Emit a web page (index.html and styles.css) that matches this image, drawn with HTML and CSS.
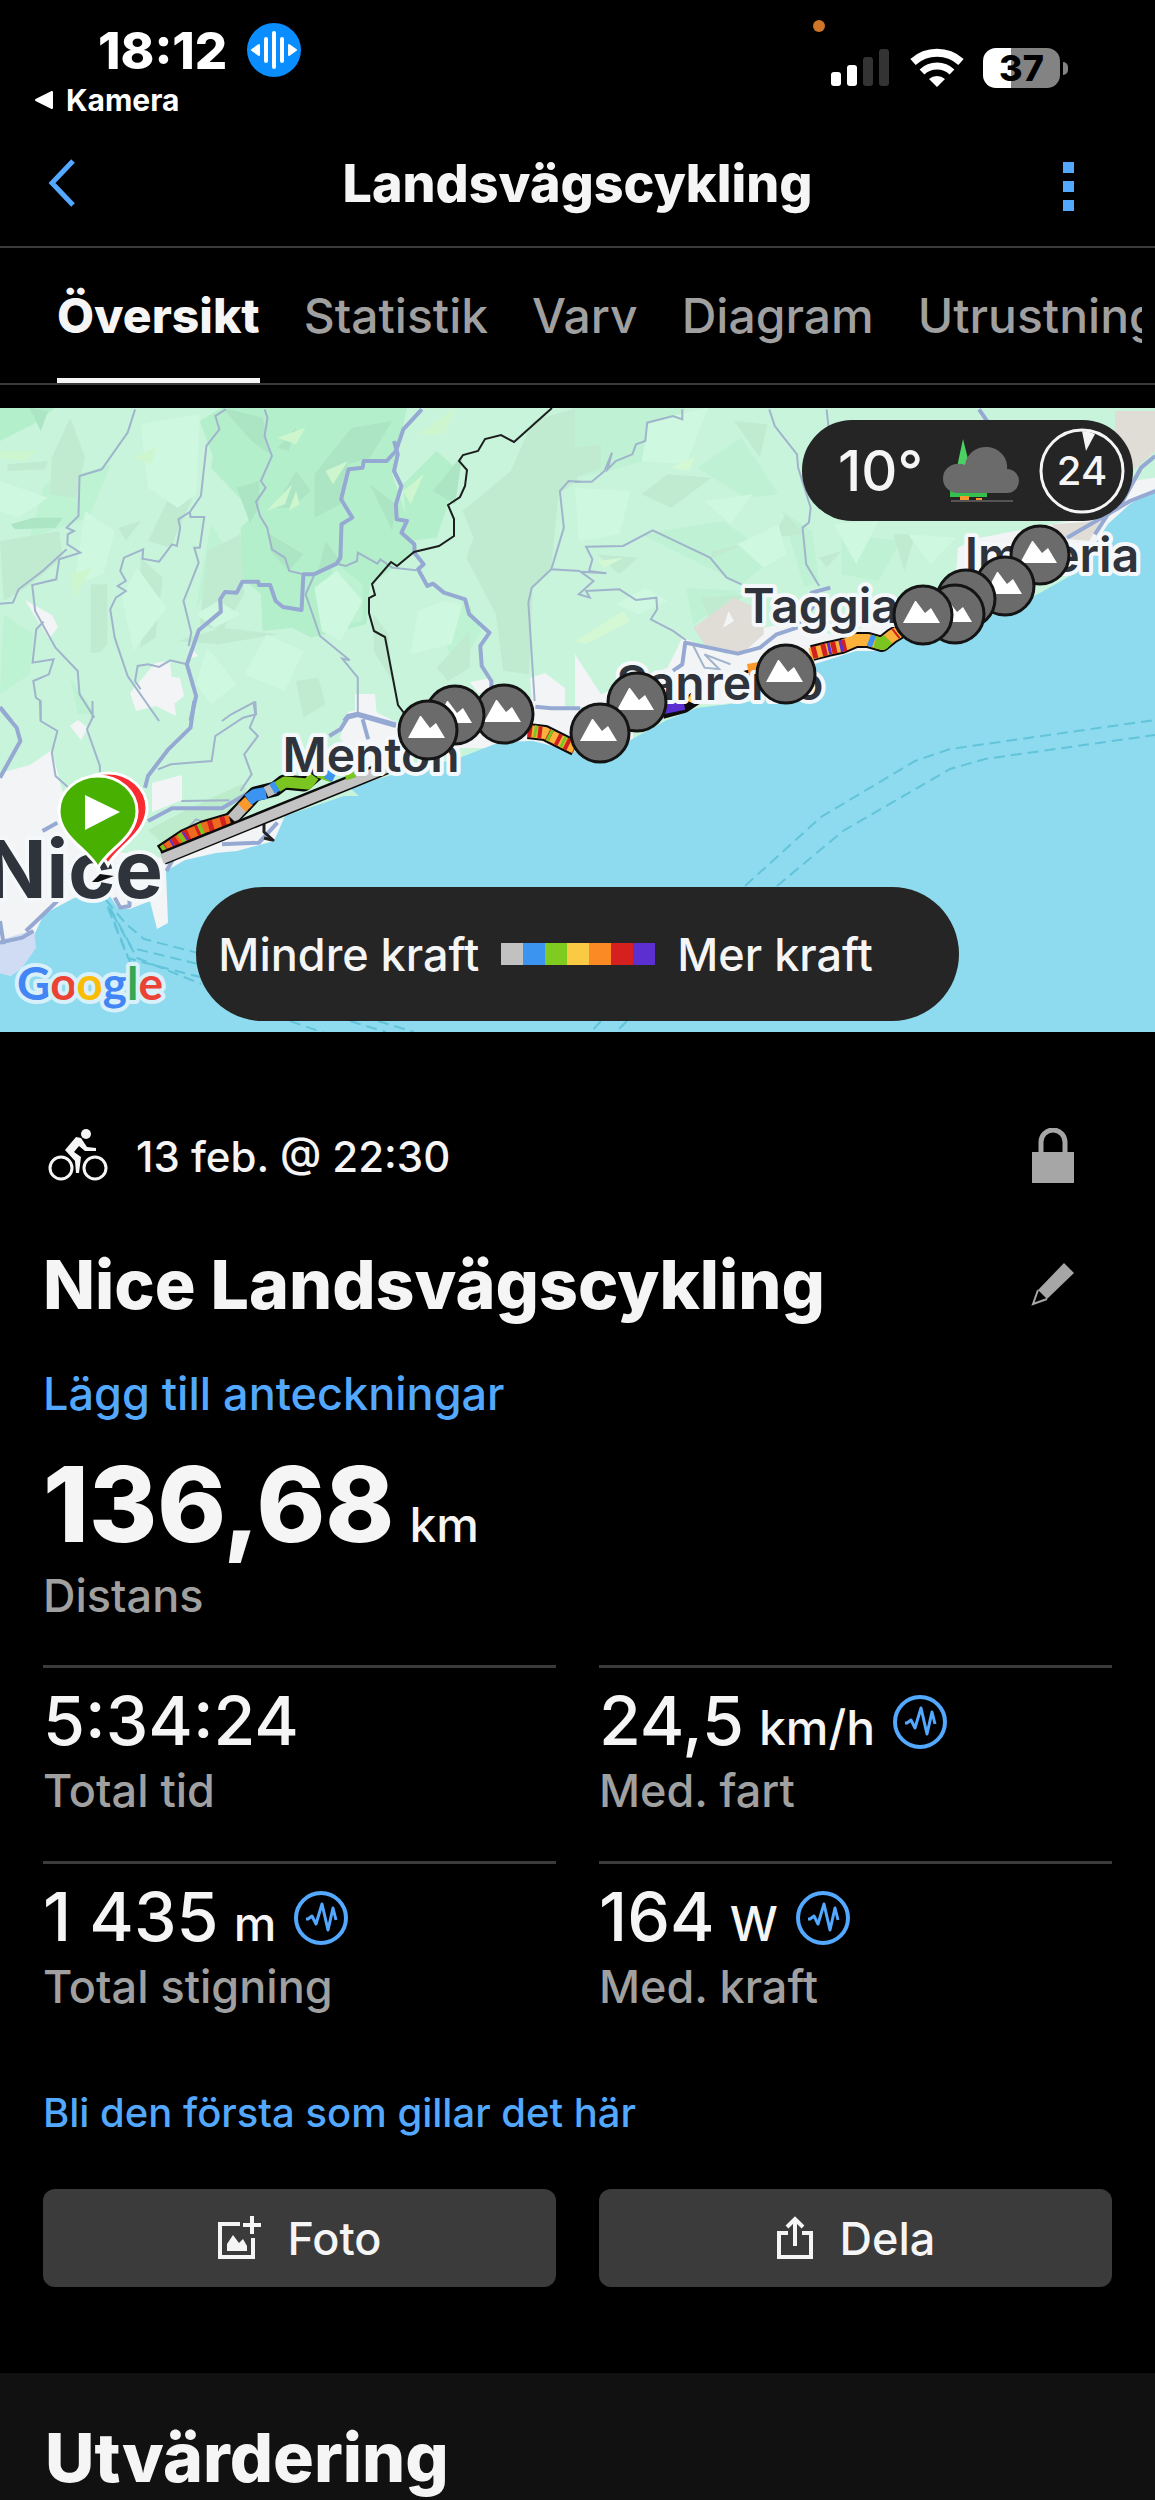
FILE: index.html
```html
<!DOCTYPE html>
<html lang="sv">
<head>
  <meta charset="UTF-8" />
  <meta name="viewport" content="width=device-width, initial-scale=1.0">
  <title>Landsvägscykling</title>
  <link rel="stylesheet" href="styles.css">
</head>
<body>

<!-- shared icons -->
<svg class="defs" aria-hidden="true">
  <symbol id="peak" viewBox="-32 -32 64 64">
    <circle r="29" fill="#6b6b6b" stroke="#141414" stroke-width="3"/>
    <path d="M-20 8L-8-14-7-14 2-2 8-7 17 8z" fill="#fff"/>
  </symbol>
  <symbol id="pulse" viewBox="0 0 54 54">
    <circle cx="27" cy="27" r="25" fill="none" stroke="#53a8ff" stroke-width="4"/>
    <path d="M12 28h2l4-3 4 8 6-20 6 26 5-22 3 12" fill="none" stroke="#53a8ff" stroke-width="3" stroke-linejoin="round"/>
  </symbol>
</svg>

<div class="status-bar">
  <div class="status-left">
    <div class="clock">
      <span>18:12</span>
      <svg width="54" height="54" viewBox="0 0 54 54">
        <circle cx="27" cy="27" r="27" fill="#0a8dff"/>
        <path d="M27 10v34M19 16v22M35 16v22" stroke="#fff" stroke-width="4" stroke-linecap="round"/>
        <path d="M12 22v10l-7-5zM42 22v10l7-5z" fill="#fff" stroke="#fff" stroke-width="2" stroke-linejoin="round"/>
      </svg>
    </div>
    <a class="back-app" href="#">
      <svg width="20" height="20" viewBox="0 0 20 20"><path d="M18 2v16L2 10z" fill="#fff" stroke="#fff" stroke-width="2" stroke-linejoin="round"/></svg>
      Kamera
    </a>
  </div>
  <div class="status-right">
    <i class="mic-dot"></i>
    <svg width="60" height="40" viewBox="0 0 60 40">
      <rect x="0" y="24" width="10" height="14" rx="3" fill="#fff"/>
      <rect x="16" y="17" width="10" height="21" rx="3" fill="#fff"/>
      <rect x="32" y="9" width="10" height="29" rx="3" fill="#333"/>
      <rect x="48" y="1" width="10" height="37" rx="3" fill="#333"/>
    </svg>
    <svg width="54" height="40" viewBox="0 0 54 40">
      <path d="M3 14a36 36 0 0 1 48 0" fill="none" stroke="#fff" stroke-width="8"/>
      <path d="M12 24a22 22 0 0 1 30 0" fill="none" stroke="#fff" stroke-width="7"/>
      <path d="M19 31a12 12 0 0 1 16 0l-8 8z" fill="#fff"/>
    </svg>
    <div class="battery"><span>37</span></div>
  </div>
</div>

<header class="top-bar">
  <button class="icon-btn back" aria-label="Tillbaka">
    <svg width="28" height="48" viewBox="0 0 28 48"><path d="M25 2L4 24l21 22" fill="none" stroke="#53a8ff" stroke-width="5"/></svg>
  </button>
  <h1>Landsvägscykling</h1>
  <button class="icon-btn" aria-label="Meny">
    <svg width="12" height="56" viewBox="0 0 12 56" fill="#53a8ff"><path d="M0 7h11v11H0zM0 26h11v11H0zM0 45h11v11H0z"/></svg>
  </button>
</header>

<nav class="tabs">
  <div class="tab-scroll">
    <a class="active" href="#">Översikt</a>
    <a href="#">Statistik</a>
    <a href="#">Varv</a>
    <a href="#">Diagram</a>
    <a href="#">Utrustning</a>
  </div>
</nav>

<section class="map">
  <svg class="map-canvas" viewBox="0 0 1155 624">
    <rect width="1155" height="624" fill="#c8f4dc"/>

    <!-- hills -->
    <g transform="translate(0 -7) scale(.37 .3333)">
      <g fill="#b4efcb">
        <path d="M600 20H1100L1060 220 1130 450 1000 550 990 670 840 710 790 680 710 690 705 580 655 530 650 380 690 340 570 200z"/>
        <path d="M0 20h150L90 70 0 120zM540 60l60-40v220z"/>
        <path d="M1090 250l90-100 60 60-60 200-80 10z"/>
      </g>
      <g fill="#bdf2d3">
        <path d="M120 250l180-60-60 160-160 60zM10 640l80 60-10 120-80 60zM900 480l80 70v110l-100 20zM190 830l70 110H210zM570 370l50 90-90 160zM1190 700l70-110 40 100-60 120zM1360 300l70 160-60 130-60-80z"/>
      </g>
      <g fill="#c1ebd1">
        <path d="M190 50l40 120-25 120-70-10 5-110zM0 420l160-30 10 80-100 90-60 40zM20 190l110-10-10 25-100 5zM245 550h45v180l-20 25h-25zM320 380l60-20-40 60zM380 470l60 60-20 180-40 30zM560 450l90-50 10 180-60 110-60-20zM470 260l50 30-60 150-60-20z"/>
        <path d="M1250 330l130-120 60-150 120-40v220l-50 40-20 220-50 60-10 260-70-10-20-170-80-170 20-60zM1180 800l90-110v110l-60 40zM1010 640l40 60 10 140-50-90zM480 720l120-40 150 20-160 30zM800 840l60-10 20 80-60 40z"/>
      </g>
      <g fill="#ace5c3">
        <path d="M600 20l110 30 20 110-50-40zM640 260l60-20v80l-25 45zM730 400l90 60-40 50-50-60zM30 370l60-20 80 0-20 30-110 5z"/>
        <path d="M850 220l100-140 110-20-60 110-60 20-20 120-70 40zM1000 250l70 60-10 80zM880 420l40 60-60 30zM750 140l50-60-20 70zM1170 270l80-110-20 150zM740 320l60-110 40 60-50 50zM80 20l50 10-20 60z"/>
      </g>
      <g fill="#cff8e0">
        <path d="M380 70l160-30-10 240-50 40-80-60zM230 330l80 60-30 130-80 30zM0 240l130 50-80 60-50-20zM330 590l40-90 80 120-90 130zM720 700l100 50-50 120-110-50zM530 640l60-40 60 40-70 40zM850 560l60-50 70 90-60 120-50-30zM1200 600l50 10-30 120-110 30 20-130zM560 740l80 110-70 60-40-60z"/>
      </g>
      <g fill="#cdf6cf">
        <path d="M750 110l75-30-25 50zM720 330l70-80-20 60zM1090 270l55-50-35 90zM880 210l60-30-40 70zM0 150h100l-30 30-70-10zM190 520l60-20-50 90zM1130 100l100-80-30 80zM780 330l20-60 10 40zM360 170l60-30-10 50z"/>
      </g>
    </g>
    <g transform="translate(575 -7) scale(.37 .3333)">
      <g fill="#bff1d4">
        <path d="M0 20h300l-80 150-130 40-90 20zM330 200l120-90 100 170-90 10zM180 400l220-40 140 110-90 80zM560 330l80 60 20 150-40 20zM300 560l150 10-130 100zM720 400l160 20-60 120-100-20z"/>
      </g>
      <g fill="#c1ebd1">
        <path d="M0 140l70-10v70l-70 30zM180 280l70-60 120 10-110 90zM370 450l90-20-90 40zM570 340l50 60-90 10zM660 470l60-20-40 50zM860 400h60l-30 110zM340 590l120-10-90 90zM60 460l110 10-50 50zM430 60l90 10-20 100z"/>
      </g>
      <g fill="#cff8e0">
        <path d="M200 60l160-40-60 170-120-10zM0 260l150 10-30 130-110 20zM440 430l110-60 20 90-60 40zM700 370l120-10-60 130zM110 610l80-50 60 40-80 40zM350 300l130-20-60 90zM900 400l130 10-70 80z"/>
      </g>
      <path d="M260 200l65-35-15 45zM0 720l130-90 20 30-120 70zM60 480l70-10-50 30z" fill="#d3f8d3"/>
      <!-- towns and bare ground -->
      <g fill="#f3f4f6">
        <path d="M250 800l40-90 120 50 100-80 90-20 90 40 120 20 60-20v110L400 910H90L0 920V760l70 120z"/>
        <path d="M1035 440l60-30 240-50 110-110 123-20v80l-180 160-120 40-160 40h-80zM760 690l90-60 20 80z"/>
      </g>
      <path d="M320 680l110-90 80 40v70l-60 60-100-30zM1460 30h108v120l-60 60-50-80zM1290 370l130-10-30 60-90-10z" fill="#dfddd6"/>
      <path d="M400 680l15-50 15 30z" fill="#f3f4f6"/>
    </g>
    <g fill="#f3f4f6">
      <path d="M0 365l30-8 22-15 10 40 40 60 60 8 20-10 30-20 80-10 40-15v30l-90 40-60 20 14 60-20 20-40-60H60L20 560 0 570zM340 330l8-26 20-4 40 20 60-25 80 10 30-5 55 10v30L420 340l-40 30-20-10zM530 270l15-5 20 15v50h-30z"/>
      <path d="M25 192l27 15 6 12-9 12zM130 285l25-30 15-2 3 30 3 25-20-10-20 5zM168 268l12 2 4 18-10 8zM355 286h20l2 24h-22zM190 238l8 10-7 2zM70 318l8-6 10 8-7 12zM470 274l20-4v15h-12z"/>
      <path d="M152 375l30-8v25l-30 12z"/>
    </g>
    <path d="M148 422l42-22 52-24 10 12-42 35-40 20z" fill="#bdeccd"/>

    <!-- sea -->
    <path d="M1155 81L1130 96 1108 116 1095 136 1075 165 1040 185 1010 200 960 220 897 232 880 243 856 243 815 256 812 275 782 290 697 300 667 312 625 335 580 345 533 333 500 334 459 350 388 368 350 380 359 388 344 388 285 408 274 433 237 443 216 445 185 452 166 463 168 515 157 521 150 493 130 501 118 500 107 484 74 490 44 506 22 553 11 568 0 565V624H1155z" fill="#8edaee"/>
    <path d="M0 532l34-10 2 18-14 20-11 8-11-3z" fill="#cfdcf3"/>

    <!-- ferry lines -->
    <g fill="none" stroke="#62c4da" stroke-width="2" stroke-dasharray="11 6">
      <path d="M745 478L821 409 915 353 950 341 1155 312M777 478L843 423 950 361 985 351 1155 327"/>
      <path d="M106 492l20 24 18 15 54 14M110 500l22 40 66 16M108 500l20 50 14 4 58 15M112 505l25 45 64 26M108 498l22 56"/>
      <path d="M290 613l40 14M350 613l36 11M378 613l36 11M601 613l-10 11M627 613l-11 11"/>
    </g>

    <!-- small roads -->
    <g fill="none" stroke="#a0b4cc" stroke-width="2">
      <g transform="translate(0 -7) scale(.37 .3333)">
        <path vector-effect="non-scaling-stroke" d="M365 25L345 95 275 205 215 225 212 345 180 380 200 390 183 400 182 430 217 455 160 475 152 535 87 552 95 630 150 740 210 810 215 880 255 950M180 445L115 510 50 565 35 605 0 608M118 662L98 685 88 785 145 775 132 820 90 840 97 890 110 900V960"/>
        <path vector-effect="non-scaling-stroke" d="M610 25L582 45 593 85 558 135 543 285 513 333 482 355 487 380 478 435 465 430 430 482 385 473 387 445 335 470 325 510 340 540 318 555 340 570 313 590 298 625 310 710 345 825 430 960M513 333L515 348H552L540 440 525 440 537 485 496 600 517 695 510 735M505 790L460 778 430 798 400 790 372 795 365 840 380 865"/>
        <path vector-effect="non-scaling-stroke" d="M715 25L723 50 715 105 735 165 705 240 718 260 692 303 703 345 722 380 735 445 770 470 782 510 820 520M848 525L826 580 865 705 945 778 925 773 967 830V940M915 490L935 495 965 480 967 455 1020 488 1028 475 1060 500 1125 508"/>
        <path vector-effect="non-scaling-stroke" d="M1568 242L1537 240 1513 270 1524 380 1490 505 1568 510M1490 505L1437 560 1428 605 1445 900M600 960L625 940 685 905 690 940"/>
      </g>
      <g transform="translate(575 -7) scale(.37 .3333)">
        <path vector-effect="non-scaling-stroke" d="M290 25V55L265 45 195 65 190 120 165 130 155 160 110 180 88 205 100 155 80 210 45 242H0M525 25L540 75 600 160 603 200 637 320 632 365 615 380 625 490 660 555M680 25l5 50"/>
        <path vector-effect="non-scaling-stroke" d="M450 550L410 530 365 470 210 388 130 435 30 437 47 475 38 510 85 517 15 512 50 540 10 580 40 590 30 570 120 565 165 597 220 590 222 625 205 655 265 690 300 718M320 735L350 800 390 805 350 760 420 790"/>
      </g>
      <g transform="translate(0 293) scale(.37 .3333)">
        <path vector-effect="non-scaling-stroke" d="M108 0l2 60 45 30-15 65 10 70 40 40M250 0v50l-15 35 35 110v60M690 0l2 40-35 10-75 55-10 75-110 10-35 15M690 40L675 80 697 105 660 160 680 220 650 270M490 300l130-2M500 390l30-35 40 15"/>
      </g>
    </g>

    <!-- main roads -->
    <g fill="none" stroke="#95a9d3" stroke-width="4" stroke-linejoin="round">
      <g transform="translate(0 -7) scale(.37 .3333)">
        <path vector-effect="non-scaling-stroke" d="M1140 25L1090 85 1070 150 1045 180H983L980 200 942 205 922 295 952 350 923 370 920 470 910 488 848 520H820L815 627 765 618 745 600 730 552H700L698 542H655L640 575 608 573 595 595 597 632 537 688 505 790 530 885 515 960"/>
        <path vector-effect="non-scaling-stroke" d="M1065 120L1075 160 1065 210 1085 255 1070 310 1072 355 1100 360 1085 395 1120 430V455L1145 490 1130 505 1155 555 1170 548 1200 575 1257 595 1268 640 1323 695 1298 735 1302 795 1328 840V870M0 918L30 960M930 960L940 945 967 938 1070 970M1447 917L1490 922H1568"/>
      </g>
      <g transform="translate(575 -7) scale(.37 .3333)">
        <path vector-effect="non-scaling-stroke" d="M265 810L290 790 298 725 440 758 500 740 545 700 600 680 655 600 640 575 690 560M1092 25L1120 70M1568 165L1530 200 1500 260 1470 320 1330 410M1568 270L1500 300 1440 340 1405 400"/>
      </g>
      <g transform="translate(0 293) scale(.37 .3333)">
        <path vector-effect="non-scaling-stroke" d="M525 0L515 80 455 145 400 225 392 260M0 20L45 80 55 120 0 230M890 105L920 85 940 50 967 42 1070 75M980 55l15 60M400 360L465 322H600L680 270M115 390l40-25M155 600L70 690M0 725L60 710 90 690M0 660l10 70M310 590l15 30 25-5V570M600 430l100-5 50-60M450 510l20-40"/>
      </g>
    </g>

    <!-- border -->
    <path d="M552 0L514 34 501 27 485 31 478 43 463 47 459 53 467 62 465 78 460 89 448 97 454 111V128L439 138 414 144 397 158 391 154 372 176 375 187 369 190V205L374 223 385 229 398 297 404 305" fill="none" stroke="#1d1f1e" stroke-width="2"/>

    <!-- ride track, coloured by power -->
    <g fill="none" stroke-linejoin="round">
      <path d="M161 444L185 428 203 420 230 412 244 398 255 386 275 381 284 374 304 376 318 364" stroke="#0c0c0c" stroke-width="15"/>
      <path d="M264 430l8 2M264 416v8l10 9" stroke="#222" stroke-width="3"/>
      <path d="M163 443L185 428 203 420 230 412" stroke="#ee6a1f" stroke-width="11"/>
      <path d="M163 443L185 428 203 420 230 412" stroke="#d3201f" stroke-width="11" stroke-dasharray="5 8"/>
      <path d="M163 443L185 428 203 420" stroke="#7ac520" stroke-width="11" stroke-dasharray="4 17"/>
      <path d="M172 437L190 426" stroke="#5b2fd0" stroke-width="11" stroke-dasharray="2 13"/>
      <path d="M232 411L244 398" stroke="#bfbfbf" stroke-width="11"/>
      <path d="M242 400L249 393" stroke="#fb9a2c" stroke-width="11"/>
      <path d="M248 392L255 387 266 385" stroke="#3b94ef" stroke-width="12"/>
      <path d="M266 384L275 380" stroke="#bfbfbf" stroke-width="11"/>
      <path d="M277 379L285 374 308 376 314 368" stroke="#7ac520" stroke-width="11"/>
      <path d="M272 381l5-3" stroke="#3b94ef" stroke-width="11"/>
      <path d="M163 450L390 358" stroke="#0c0c0c" stroke-width="14"/>
      <path d="M162 451L391 358" stroke="#c3c3c3" stroke-width="10"/>
      <path d="M318 365l14 5M345 368l10-3" stroke="#7ac520" stroke-width="9"/>
      <path d="M326 366l8 4" stroke="#3b94ef" stroke-width="9"/>

      <path d="M528 323L545 325 575 340" stroke="#0c0c0c" stroke-width="16"/>
      <path d="M528 323L545 325 575 340" stroke="#fbb13a" stroke-width="12"/>
      <path d="M528 323L545 325 575 340" stroke="#d3201f" stroke-width="12" stroke-dasharray="4 6"/>
      <path d="M534 323L545 325 575 340" stroke="#7ac520" stroke-width="12" stroke-dasharray="3 12"/>
      <path d="M662 304l22-6 12-8" stroke="#0c0c0c" stroke-width="14"/>
      <path d="M660 301l24-5" stroke="#5b2fd0" stroke-width="12"/>
      <path d="M690 294l5-10" stroke="#fbca45" stroke-width="6"/>
      <path d="M728 268l22-5 10-8" stroke="#0c0c0c" stroke-width="3"/>
      <path d="M748 262l12-2" stroke="#fb9a2c" stroke-width="12"/>
      <path d="M812 245L828 241 842 238 856 232 868 232 882 236 892 228 902 222" stroke="#0c0c0c" stroke-width="16"/>
      <path d="M810 246L828 241 842 238 856 232 868 232 882 236 892 228 902 222" stroke="#fbb13a" stroke-width="12"/>
      <path d="M812 245L828 241 846 237" stroke="#d3201f" stroke-width="12" stroke-dasharray="5 5"/>
      <path d="M828 241l18-4" stroke="#5b2fd0" stroke-width="12" stroke-dasharray="3 9"/>
      <path d="M869 232l5 2" stroke="#3b94ef" stroke-width="12"/>
      <path d="M875 234l8 2 5-5" stroke="#7ac520" stroke-width="12"/>
      <path d="M895 226l5-4" stroke="#d3201f" stroke-width="12" stroke-dasharray="2 2"/>
    </g>

    <g class="places">
      <text class="city" x="163" y="490">Nice</text>
      <text x="371" y="364" text-anchor="middle">Menton</text>
      <text x="743" y="215">Taggia</text>
      <text x="720" y="292" text-anchor="middle">Sanremo</text>
      <text x="1052" y="164" text-anchor="middle">Imperia</text>
    </g>

    <!-- climbs -->
    <use href="#peak" x="1008" y="115" width="64" height="64"/>
    <use href="#peak" x="973" y="146" width="64" height="64"/>
    <use href="#peak" x="934" y="159" width="64" height="64"/>
    <use href="#peak" x="923" y="174" width="64" height="64"/>
    <use href="#peak" x="891" y="175" width="64" height="64"/>
    <use href="#peak" x="754" y="234" width="64" height="64"/>
    <use href="#peak" x="605" y="262" width="64" height="64"/>
    <use href="#peak" x="568" y="293" width="64" height="64"/>
    <use href="#peak" x="472" y="274" width="64" height="64"/>
    <use href="#peak" x="423" y="275" width="64" height="64"/>
    <use href="#peak" x="396" y="290" width="64" height="64"/>

    <!-- start and finish -->
    <path d="M92 474l8-8 14 2-16 6z" fill="#111"/>
    <path d="M108 457C100 440 69 426 69 400a39 35 0 0 1 78 0c0 26-31 40-39 57z" fill="#fb2b32" stroke="#fff" stroke-width="3"/>
    <path d="M98 460C90 442 59 430 59 403a39 35 0 0 1 78 0c0 27-31 39-39 57z" fill="#47b000" stroke="#fff" stroke-width="3"/>
    <path d="M85 387v35l35-18z" fill="#fff"/>

    <text class="google" x="17" y="592"><tspan fill="#4285f4">G</tspan><tspan fill="#ea4335">o</tspan><tspan fill="#fbbc05">o</tspan><tspan fill="#4285f4">g</tspan><tspan fill="#34a853">l</tspan><tspan fill="#ea4335">e</tspan></text>
  </svg>

  <div class="weather">
    <span class="temp">10°</span>
    <svg width="76" height="64" viewBox="0 0 76 64">
      <path d="M20 0l7 28H14z" fill="#4cd264"/>
      <path d="M7 52h37v6H7z" fill="#34c04c"/>
      <path d="M17 57h9v5h-9zM33 59h6v3h-6z" fill="#fb9a2c"/>
      <path d="M8 61h62v2H8z" fill="#545456"/>
      <path d="M15 54a14 14 0 0 1-1-29q4-1 8 1a21 20 0 0 1 42 4a12 12 0 0 1 0 24z" fill="#6b6b6b"/>
    </svg>
    <div class="wind">
      <svg width="86" height="86" viewBox="0 0 86 86">
        <circle cx="43" cy="43" r="41" fill="none" stroke="#f5f5f5" stroke-width="3"/>
        <path d="M43 3q7 0 13 3l-9 17z" fill="#f5f5f5"/>
      </svg>
      <span>24</span>
    </div>
  </div>

  <div class="legend">
    <span>Mindre kraft</span>
    <div class="scale"><i></i><i></i><i></i><i></i><i></i><i></i><i></i></div>
    <span>Mer kraft</span>
  </div>
</section>

<main class="summary">
  <div class="row meta">
    <svg width="60" height="56" viewBox="0 0 60 56">
      <circle cx="13" cy="40" r="11" fill="none" stroke="#f5f5f5" stroke-width="3"/>
      <circle cx="47" cy="40" r="11" fill="none" stroke="#f5f5f5" stroke-width="3"/>
      <circle cx="38" cy="6" r="5" fill="#f5f5f5"/>
      <path d="M17 22L28 9l5 1 6 9 9 1v3H37l-6-5-5 6 7 5-2 16h-3l-1-12z" fill="#f5f5f5"/>
    </svg>
    <span class="date">13 feb. @ 22:30</span>
    <svg class="end" width="44" height="56" viewBox="0 0 44 56">
      <path d="M1 24h42v31H1z" fill="#a6a6a6"/>
      <path d="M10 26V14a12 12 0 0 1 24 0v12" fill="none" stroke="#a6a6a6" stroke-width="5"/>
    </svg>
  </div>

  <div class="row name">
    <h2>Nice Landsvägscykling</h2>
    <button class="icon-btn end" aria-label="Redigera">
      <svg width="44" height="44" viewBox="0 0 44 44">
        <path d="M33 1l10 10-27 26L7 28z" fill="#a6a6a6"/>
        <path d="M7 28L2 42l14-5" fill="none" stroke="#a6a6a6" stroke-width="2"/>
      </svg>
    </button>
  </div>

  <a class="notes" href="#">Lägg till anteckningar</a>

  <div class="distance">
    <p class="value">136,68<small>km</small></p>
    <p class="label">Distans</p>
  </div>

  <div class="stats">
    <div class="stat">
      <p class="value">5:34:24</p>
      <p class="label">Total tid</p>
    </div>
    <div class="stat">
      <p class="value">24,5<small>km/h</small><svg width="54" height="54"><use href="#pulse"/></svg></p>
      <p class="label">Med. fart</p>
    </div>
    <div class="stat">
      <p class="value">1 435<small>m</small><svg width="54" height="54"><use href="#pulse"/></svg></p>
      <p class="label">Total stigning</p>
    </div>
    <div class="stat">
      <p class="value">164<small>W</small><svg width="54" height="54"><use href="#pulse"/></svg></p>
      <p class="label">Med. kraft</p>
    </div>
  </div>

  <a class="likes" href="#">Bli den första som gillar det här</a>

  <div class="actions">
    <button>
      <svg width="44" height="44" viewBox="0 0 44 44" fill="none" stroke="#f5f5f5" stroke-width="4">
        <path d="M23 8H3v33h33V22M35 0v18M26 9h18"/>
        <path d="M10 35V28l6-9 6 8 4-4 4 7v5z" fill="#f5f5f5" stroke="none"/>
      </svg>
      Foto
    </button>
    <button>
      <svg width="38" height="44" viewBox="0 0 38 44" fill="none" stroke="#f5f5f5" stroke-width="4">
        <path d="M12 17H3v24h32V17h-9M19 30V4M11 11l8-8 8 8"/>
      </svg>
      Dela
    </button>
  </div>
</main>

<section class="evaluation">
  <h2>Utvärdering</h2>
</section>

</body>
</html>
```
FILE: styles.css
```css
* {
  box-sizing: border-box;
}
body {
  margin: 0;
  background: #000;
  color: #f5f5f5;
  font-family: Inter, "Liberation Sans", sans-serif;
  font-weight: 500;
}
h1, h2, p {
  margin: 0;
}
a {
  color: #53a8ff;
  text-decoration: none;
}
svg {
  display: block;
  flex: none;
}
.defs {
  position: absolute;
  width: 0;
  height: 0;
}
.icon-btn {
  display: flex;
  padding: 0;
  border: 0;
  background: none;
}

/* status bar */
.status-bar {
  display: flex;
  justify-content: space-between;
  height: 120px;
  padding: 20px 95px 0 34px;
  color: #fff;
}
.clock {
  display: flex;
  align-items: center;
  gap: 20px;
  height: 60px;
  padding-left: 64px;
  font-size: 51px;
  font-weight: 800;
}
.back-app {
  display: flex;
  align-items: center;
  gap: 12px;
  height: 40px;
  color: #fff;
  font-size: 30px;
  font-weight: 700;
}
.status-right {
  position: relative;
  display: flex;
  align-items: center;
  gap: 19px;
  height: 96px;
}
.mic-dot {
  position: absolute;
  top: 0;
  left: -18px;
  width: 12px;
  height: 12px;
  border-radius: 50%;
  background: #cf7527;
}
.battery {
  position: relative;
  width: 77px;
  height: 40px;
  border-radius: 13px;
  background: linear-gradient(90deg, #fff 37%, #838383 37%);
  color: #000;
  font-size: 36px;
  font-weight: 800;
  line-height: 40px;
  text-align: center;
}
.battery::after {
  content: "";
  position: absolute;
  top: 14px;
  right: -8px;
  width: 5px;
  height: 13px;
  border-radius: 0 5px 5px 0;
  background: #838383;
}

/* header */
.top-bar {
  display: flex;
  align-items: center;
  height: 128px;
  padding: 0 80px 0 48px;
  border-bottom: 2px solid #3b3b3b;
}
.top-bar h1 {
  flex: 1;
  font-size: 52px;
  font-weight: 800;
  text-align: center;
}
.back {
  width: 44px;
}
.tabs {
  padding: 0 13px;
  border-bottom: 2px solid #3b3b3b;
}
.tab-scroll {
  display: flex;
  gap: 44px;
  height: 135px;
  padding-left: 44px;
  overflow: hidden;
  font-size: 48px;
}
.tabs a {
  padding-top: 38px;
  color: #a0a0a0;
  white-space: nowrap;
}
.tabs .active {
  border-bottom: 5px solid #f5f5f5;
  color: #f5f5f5;
  font-weight: 800;
}

/* map */
.map {
  position: relative;
  margin-top: 23px;
}
.map-canvas {
  width: 100%;
  height: auto;
}
.places text {
  fill: #2f333b;
  stroke: #f5f8fa;
  stroke-width: 8px;
  stroke-linejoin: round;
  paint-order: stroke;
  font-size: 48px;
  font-weight: 600;
}
.places .city {
  font-size: 80px;
  font-weight: 700;
  text-anchor: end;
}
.google {
  font-family: Lato, sans-serif;
  font-size: 46px;
  font-weight: 700;
  stroke: #d8f0fa;
  stroke-width: 8px;
  stroke-linejoin: round;
  paint-order: stroke;
}
.weather {
  position: absolute;
  top: 12px;
  right: 22px;
  display: flex;
  align-items: center;
  gap: 20px;
  height: 101px;
  padding: 0 8px 0 36px;
  border-radius: 50px;
  background: #252525;
}
.temp {
  font-size: 56px;
}
.wind {
  display: grid;
  place-items: center;
  font-size: 40px;
}
.wind > * {
  grid-area: 1 / 1;
}
.legend {
  position: absolute;
  bottom: 11px;
  left: 17%;
  right: 17%;
  display: flex;
  align-items: center;
  gap: 22px;
  height: 134px;
  padding-left: 22px;
  border-radius: 67px;
  background: #252525;
  font-size: 45px;
  white-space: nowrap;
}
.scale {
  display: flex;
}
.scale i {
  width: 22px;
  height: 22px;
  background: #c1c1c1;
}
.scale i:nth-child(2) { background: #3b94ef; }
.scale i:nth-child(3) { background: #7fcb1f; }
.scale i:nth-child(4) { background: #fbca45; }
.scale i:nth-child(5) { background: #fb8a24; }
.scale i:nth-child(6) { background: #d6201f; }
.scale i:nth-child(7) { background: #5b2fd0; }

/* summary */
.summary {
  padding: 84px 43px 86px;
}
.row {
  display: flex;
  align-items: center;
}
.end {
  margin-left: auto;
  margin-right: 37px;
}
.meta {
  height: 80px;
  padding-left: 5px;
  gap: 28px;
}
.date {
  font-size: 42px;
}
.name {
  height: 176px;
}
.name h2,
.evaluation h2 {
  font-size: 68px;
  font-weight: 800;
  line-height: 84px;
}
.notes {
  display: block;
  font-size: 45px;
  line-height: 44px;
}
.label {
  color: #a0a0a0;
  font-size: 45px;
  line-height: 52px;
}
.value {
  display: flex;
  align-items: baseline;
  white-space: nowrap;
}
.value small {
  margin-left: 15px;
  font-size: 48px;
  font-weight: 500;
}
.distance {
  padding: 43px 0;
}
.distance .value {
  font-size: 104px;
  font-weight: 800;
  line-height: 90px;
}
.stats {
  display: grid;
  grid-template-columns: 1fr 1fr;
  column-gap: 43px;
}
.stat {
  height: 196px;
  padding-top: 10px;
  border-top: 3px solid #3b3b3b;
}
.stat .value {
  height: 87px;
  font-size: 68px;
  line-height: 84px;
}
.stat .value svg {
  align-self: center;
  margin-left: 18px;
}
.likes {
  display: block;
  padding: 32px 0 52px;
  font-size: 40px;
  line-height: 48px;
}
.actions {
  display: grid;
  grid-template-columns: 1fr 1fr;
  gap: 43px;
}
.actions button {
  display: flex;
  align-items: center;
  justify-content: center;
  gap: 26px;
  height: 98px;
  border: 0;
  border-radius: 12px;
  background: #3b3b3b;
  color: #f5f5f5;
  font: inherit;
  font-size: 45px;
}
.evaluation {
  min-height: 128px;
  padding: 42px 45px 0;
  background: #111;
}
```
